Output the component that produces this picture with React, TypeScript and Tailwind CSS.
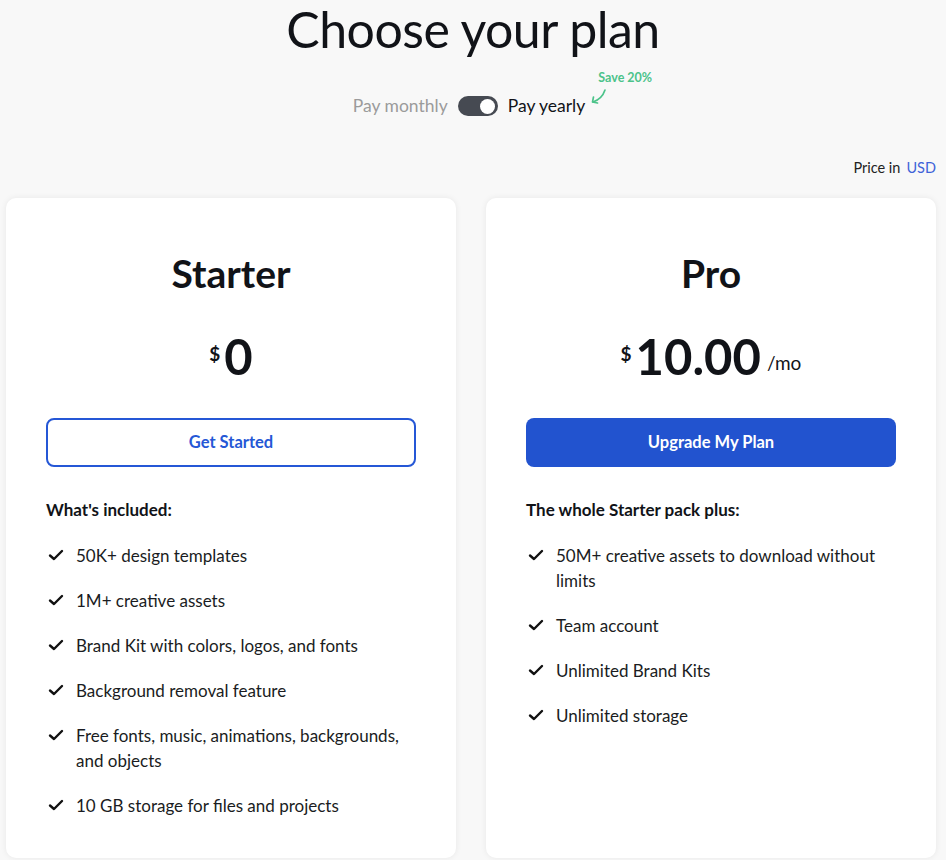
import React, { useState } from 'react';

interface Plan {
  name: string;
  price: string;
  suffix?: string;
  cta: string;
  primary: boolean;
  heading: string;
  features: string[];
}

const plans: Plan[] = [
  {
    name: 'Starter',
    price: '0',
    cta: 'Get Started',
    primary: false,
    heading: "What's included:",
    features: [
      '50K+ design templates',
      '1M+ creative assets',
      'Brand Kit with colors, logos, and fonts',
      'Background removal feature',
      'Free fonts, music, animations, backgrounds, and objects',
      '10 GB storage for files and projects',
    ],
  },
  {
    name: 'Pro',
    price: '10.00',
    suffix: '/mo',
    cta: 'Upgrade My Plan',
    primary: true,
    heading: 'The whole Starter pack plus:',
    features: [
      '50M+ creative assets to download without limits',
      'Team account',
      'Unlimited Brand Kits',
      'Unlimited storage',
    ],
  },
];

function Check() {
  return (
    <svg width="16" height="16" viewBox="0 0 16 16" className="shrink-0 mt-[4px]">
      <path d="M2 8.5 L6 12 L14 4" fill="none" stroke="#111" strokeWidth="2.4" strokeLinecap="round" strokeLinejoin="round" />
    </svg>
  );
}

export default function App() {
  const [yearly, setYearly] = useState(true);

  return (
    <div className="min-h-[860px] bg-[#f8f8f8] text-[#111318]" style={{ fontFamily: 'Lato, "Noto Sans", sans-serif' }}>
      {/* Header */}
      <h1 className="text-center text-[50px] leading-[58px] font-normal tracking-[-0.5px]">Choose your plan</h1>

      <div className="flex justify-center items-center mt-[37px] h-[22px] pl-[22px]">
        <span className={`text-[17.5px] ${yearly ? 'text-[#9b9b9b]' : 'text-[#111318]'}`}>Pay monthly</span>
        <button
          onClick={() => setYearly(!yearly)}
          className="mx-[10px] w-[40px] h-[20px] rounded-full bg-[#464a52] flex items-center px-[3px]"
        >
          <span className={`w-[15px] h-[15px] rounded-full bg-white ${yearly ? 'ml-auto' : ''}`} />
        </button>
        <span className={`text-[17.5px] ${yearly ? 'text-[#111318]' : 'text-[#9b9b9b]'}`}>Pay yearly</span>
        <div className="relative w-[30px] h-[20px]">
          <svg width="22" height="20" viewBox="0 0 22 20" className="absolute left-[3px] top-[-8px]">
            <path d="M17 2 C15 8 11 12 5 14" fill="none" stroke="#4cc38a" strokeWidth="1.7" strokeLinecap="round" />
            <path d="M5.5 9 L4.5 14 L9.5 15" fill="none" stroke="#4cc38a" strokeWidth="1.7" strokeLinecap="round" strokeLinejoin="round" />
          </svg>
          <span className="absolute left-[13px] top-[-27px] whitespace-nowrap text-[12.5px] font-bold text-[#4cc38a]">Save 20%</span>
        </div>
      </div>

      <div className="flex justify-end pr-[10px] mt-[41px] text-[14.5px] h-[20px] items-center">
        <span className="text-[#222]">Price in</span>
        <span className="ml-[6px] text-[#3f63d8]">USD</span>
      </div>

      {/* Cards */}
      <div className="flex gap-[30px] px-[6px] mt-[20px]">
        {plans.map((p) => (
          <div
            key={p.name}
            className="w-[450px] bg-white rounded-[10px] shadow-[0_0_6px_rgba(0,0,0,0.07)] px-[40px] pt-[52px] pb-[40px] self-stretch"
          >
            <h2 className="text-center text-[39px] leading-[46px] font-bold">{p.name}</h2>
            <div className="flex justify-center items-center mt-[30px] h-[60px]">
              <span className="text-[19px] font-bold mr-[4px] mt-[-4px]">$</span>
              <span className="text-[49px] leading-[60px] font-bold">{p.price}</span>
              {p.suffix && <span className="text-[19px] ml-[6px] mt-[14px]">{p.suffix}</span>}
            </div>
            <button
              className={`mt-[32px] w-full h-[49px] rounded-[8px] text-[16.5px] font-bold ${
                p.primary ? 'bg-[#2253cf] text-white' : 'border-2 border-[#2557d6] text-[#2557d6] bg-white'
              }`}
            >
              {p.cta}
            </button>
            <div className="mt-[32px] text-[17px] font-bold leading-[22px]">{p.heading}</div>
            <ul className="mt-[22px] flex flex-col gap-[20px]">
              {p.features.map((f) => (
                <li key={f} className="flex gap-[12px] text-[17px] leading-[25px] text-[#1a1c22] pl-[2px]">
                  <Check />
                  <span>{f}</span>
                </li>
              ))}
            </ul>
          </div>
        ))}
      </div>
    </div>
  );
}
